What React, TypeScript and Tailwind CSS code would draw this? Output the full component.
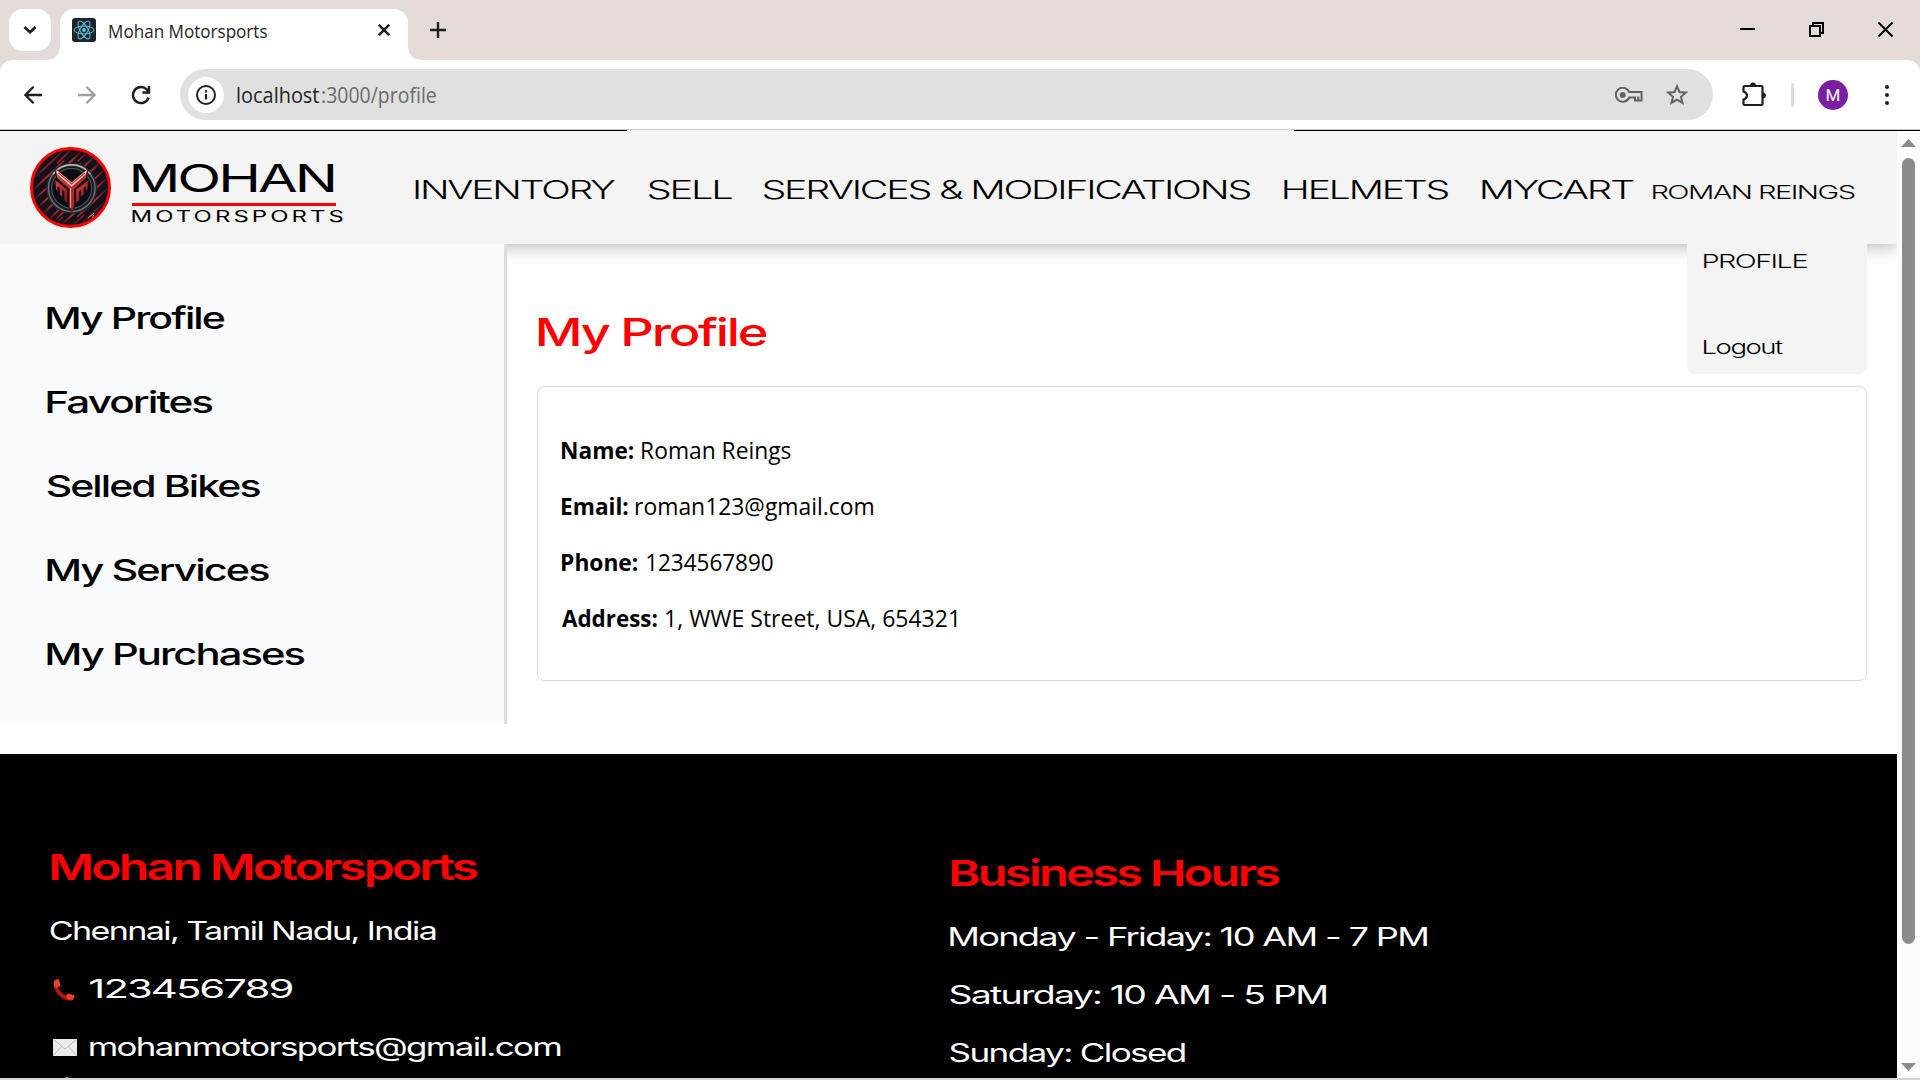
import React, { useLayoutEffect, useRef } from "react";

type FitProps = { w: number; className?: string; children: string };

/* Single line of text whose ink spans exactly `w` pixels. */
function Fit({ w, className = "", children }: FitProps) {
  const ref = useRef<HTMLSpanElement>(null);
  useLayoutEffect(() => {
    const fit = () => {
      const el = ref.current;
      const ctx = document.createElement("canvas").getContext("2d");
      if (!el || !ctx) return;
      const cs = getComputedStyle(el);
      ctx.font = `${cs.fontWeight} ${cs.fontSize} ${cs.fontFamily}`;
      (ctx as any).letterSpacing = cs.letterSpacing === "normal" ? "0px" : cs.letterSpacing;
      const m = ctx.measureText(children);
      const left = -m.actualBoundingBoxLeft;
      const ink = m.actualBoundingBoxRight - left;
      const s = w / ink;
      el.style.transform = `translateX(${-left * s}px) scaleX(${s})`;
    };
    fit();
    document.fonts?.ready.then(fit);
  }, [w, children]);
  return (
    <div className={`shrink-0 ${className}`} style={{ width: w }}>
      <span ref={ref} className="inline-block origin-left whitespace-pre align-top">
        {children}
      </span>
    </div>
  );
}

function ReactMark() {
  return (
    <svg viewBox="0 0 24 24" className="size-6 shrink-0">
      <rect width="24" height="24" rx="3" fill="#20232a" />
      <g fill="none" stroke="#58c4dc" strokeWidth="1">
        <ellipse cx="12" cy="12" rx="10" ry="3.9" />
        <ellipse cx="12" cy="12" rx="10" ry="3.9" transform="rotate(60 12 12)" />
        <ellipse cx="12" cy="12" rx="10" ry="3.9" transform="rotate(120 12 12)" />
      </g>
      <circle cx="12" cy="12" r="2" fill="#58c4dc" />
    </svg>
  );
}

function TabStrip() {
  return (
    <div className="flex h-[60px] bg-[#e3dbd8]">
      <div className="mt-[9px] ml-[9px] flex size-[42px] items-center justify-center rounded-[14px] bg-white">
        <svg viewBox="0 0 14 8" className="h-2 w-[14px]" fill="none" stroke="#1f1f1f" strokeWidth="2.6">
          <path d="M1.5 1 7 6.3 12.5 1" />
        </svg>
      </div>
      <svg viewBox="0 0 15 15" className="mt-[45px] -ml-[6px] size-[15px] shrink-0" fill="#fff">
        <path d="M15 0V15H0Q15 15 15 0Z" />
      </svg>
      <div className="mt-[9px] flex h-[51px] w-[348px] items-start rounded-t-[14px] bg-white pt-[9px] pl-3">
        <ReactMark />
        <Fit w={158} className="ml-[13px] font-['Open_Sans'] text-[18px] leading-[27px] text-[#1f1f1f]">
          Mohan Motorsports
        </Fit>
        <svg viewBox="0 0 12 12" className="mt-[6px] ml-[111px] size-3 shrink-0" stroke="#1f1f1f" strokeWidth="2.6">
          <path d="M.8.8 11.2 11.2M11.2.8.8 11.2" />
        </svg>
      </div>
      <svg viewBox="0 0 15 15" className="mt-[45px] size-[15px] shrink-0" fill="#fff">
        <path d="M0 0V15H15Q0 15 0 0Z" />
      </svg>
      <svg viewBox="0 0 16 16" className="mt-[22px] ml-[7px] size-4" stroke="#1f1f1f" strokeWidth="2.4">
        <path d="M8 0V16M0 8H16" />
      </svg>
      <div className="mt-[22px] mr-[27px] ml-auto flex gap-[54px]">
        <svg viewBox="0 0 15 15" className="size-[15px]" fill="#000">
          <path d="M0 6h15v2H0z" />
        </svg>
        <svg viewBox="0 0 15 15" className="size-[15px]" fill="none" stroke="#000" strokeWidth="2">
          <path d="M1 4H11V14H1ZM4 4V1H14V11H11" />
        </svg>
        <svg viewBox="0 0 15 15" className="size-[15px]" stroke="#000" strokeWidth="2">
          <path d="M.5.5 14.5 14.5M14.5.5.5 14.5" />
        </svg>
      </div>
    </div>
  );
}

function Toolbar() {
  return (
    <div className="h-[69px] bg-[#e3dbd8]">
      <div className="flex h-full items-center rounded-t-[12px] bg-white pt-px pl-6">
        <svg viewBox="0 0 18 18" className="size-[18px] shrink-0" fill="none" stroke="#1f1f1f" strokeWidth="2.3">
          <path d="M18 9H1.6M9.6.8 1.4 9l8.2 8.2" />
        </svg>
        <svg viewBox="0 0 18 18" className="ml-9 size-[18px] shrink-0" fill="none" stroke="#a0a0a0" strokeWidth="2.3">
          <path d="M0 9H16.4M8.4.8 16.6 9l-8.2 8.2" />
        </svg>
        <svg viewBox="0 0 20 20" className="ml-[35px] size-5 shrink-0" fill="none" stroke="#1f1f1f" strokeWidth="2.5">
          <path d="M17.6 12.6A8 8 0 1 1 15.9 4.6L18 7" />
          <path d="M18 1V7.4H11.4" />
        </svg>
        <div className="-mt-px ml-[29px] flex h-[51px] w-[1533px] shrink-0 items-center rounded-full bg-[#e0e0e0] pt-px pl-2">
          <div className="flex size-9 items-center justify-center rounded-full bg-white">
            <svg viewBox="0 0 20 20" className="size-5" fill="none" stroke="#1f1f1f" strokeWidth="2">
              <circle cx="10" cy="10" r="9" />
              <path d="M10 9v5.6M10 5.2v2.2" strokeWidth="2.2" />
            </svg>
          </div>
          <div className="flex font-['Open_Sans'] text-[21px] leading-[30px]">
            <Fit w={82} className="ml-[13px] text-[#1f1f1f]">localhost</Fit>
            <Fit w={114} className="ml-[3px] text-[#6a6a6a]">:3000/profile</Fit>
          </div>
          <svg viewBox="0 0 28 16" className="ml-auto h-4 w-7" fill="none" stroke="#5f6368" strokeWidth="2">
            <path d="M14.2 5H26.6V13.5H20V10.5H14.2A7 7 0 1 1 14.2 5Z" />
            <circle cx="7.7" cy="8" r="3" fill="#5f6368" stroke="none" />
            <path d="M23.3 9.5v4" />
          </svg>
          <svg viewBox="0 0 24 24" className="mr-6 ml-[22px] size-6" fill="none" stroke="#5f6368" strokeWidth="2">
            <path d="m12 3.3 2.5 5.8 6.3.55-4.8 4.1 1.5 6.1L12 16.6l-5.5 3.25 1.5-6.1-4.8-4.1 6.3-.55Z" />
          </svg>
        </div>
        <svg viewBox="0 0 26 26" className="-mt-[3px] ml-[28px] size-[26px] shrink-0">
          <path
            d="M4 5H20.5Q21.5 5 21.5 6V23Q21.5 24 20.5 24H3.5Q2.5 24 2.5 23V18.6Q6 17.2 6 14.5T2.5 10.4V6Q2.5 5 4 5Z"
            fill="none"
            stroke="#1f1f1f"
            strokeWidth="2.2"
          />
          <path d="M9 5a3 3.4 0 0 1 6 0ZM21.5 11.5a3.4 3 0 0 1 0 6Z" fill="#1f1f1f" />
        </svg>
        <div className="-mt-px ml-6 h-6 w-[3px] rounded-full bg-[#e3dbd8]" />
        <div className="ml-6 flex size-[30px] items-center justify-center rounded-full bg-[#7b1fa2] font-['Roboto'] text-[17px] leading-none text-white">
          M
        </div>
        <div className="ml-[37px] flex flex-col gap-1">
          <i className="size-1 rounded-full bg-[#1f1f1f]" />
          <i className="size-1 rounded-full bg-[#1f1f1f]" />
          <i className="size-1 rounded-full bg-[#1f1f1f]" />
        </div>
      </div>
    </div>
  );
}

function Emblem() {
  const strokes = Array.from({ length: 34 }, (_, i) => {
    const y = i * 4 - 18;
    const o = (i * 7) % 11;
    return `M${2 + o} ${y + 18}L${26 + o} ${y - 4}M${46 + o} ${y + 12}L${68 + o} ${y - 8}M${26 + o} ${y + 2}L${44 + o} ${y - 14}`;
  }).join("");
  return (
    <svg viewBox="0 0 81 81" className="size-[81px] shrink-0">
      <defs>
        <clipPath id="disc">
          <circle cx="40.5" cy="40.5" r="38" />
        </clipPath>
        <linearGradient id="blade" x1="0" y1="0" x2="1" y2="1">
          <stop offset="0" stopColor="#e8443e" />
          <stop offset="1" stopColor="#8c0e16" />
        </linearGradient>
        <radialGradient id="vignette">
          <stop offset="0.72" stopColor="#10121c" stopOpacity="0" />
          <stop offset="1" stopColor="#10121c" stopOpacity="0.95" />
        </radialGradient>
      </defs>
      <circle cx="40.5" cy="40.5" r="39" fill="#10121c" />
      <g clipPath="url(#disc)">
        <path d={strokes} stroke="#c02329" strokeWidth="1.5" fill="none" />
        <circle cx="40.5" cy="40.5" r="39" fill="url(#vignette)" />
      </g>
      <circle cx="41.7" cy="41.3" r="23.5" fill="#12141d" stroke="#22262d" strokeWidth="4" />
      <circle cx="41.7" cy="41.3" r="23.3" fill="none" stroke="#6f7877" strokeWidth="1.3" />
      <path d="M23 27a23.5 23.5 0 0 1 37.4 0" fill="none" stroke="#b5bbb0" strokeWidth="1.6" />
      <circle cx="41.7" cy="41.3" r="20" fill="#0b0d15" stroke="#4e5558" strokeWidth="1.2" />
      <g stroke="#12141d" strokeWidth=".9">
        <path d="M24.5 21 41.7 35 58.5 21 56.5 31 44.6 42V60L41.7 65 38.8 60V42L26.8 31Z" fill="url(#blade)" />
        <path d="M24.8 32.5 37.6 42.5V57L34 53V44.5L32.6 43.5V50.5L29.4 47.5V41L27.8 40V46L25.6 42Z" fill="url(#blade)" />
        <path d="M58.6 32.5 45.8 42.5V57L49.4 53V44.5L50.8 43.5V50.5L54 47.5V41L55.6 40V46L57.8 42Z" fill="url(#blade)" />
      </g>
      <path d="M26 22.5 41.7 35.5 57.2 22.5 55.6 27.5 41.7 39.8 27.6 27.5Z" fill="#e6ddca" />
      <path d="M28.5 26 41.7 37 55 26" stroke="#c9262b" strokeWidth="1.1" fill="none" />
      <path d="M40.6 41V61" stroke="#efc0b0" strokeWidth=".9" />
      <path d="M58 71 64 66M62 71l2-3" stroke="#c9954f" strokeWidth="1" />
      <circle cx="40.5" cy="40.5" r="39" fill="none" stroke="#ff0000" strokeWidth="3" />
    </svg>
  );
}

function SiteHeader() {
  return (
    <header className="relative flex h-[113px] bg-[#f4f4f4] pl-[30px] shadow-[0_4px_15px_rgba(0,0,0,0.25)] [clip-path:inset(0_0_-40px_0)]">
      <div className="mt-4">
        <Emblem />
      </div>
      <div className="mt-[27px] ml-[21px] w-[213px] text-black">
        <Fit w={201} className="ml-px text-[38px] leading-[41px] tracking-[-2px]">MOHAN</Fit>
        <div className="mt-1 h-[3px] w-[204px] bg-[#ff0000]" />
        <Fit w={212} className="mt-[1px] text-[15.5px] leading-[20px] tracking-[2px]">MOTORSPORTS</Fit>
      </div>
      <nav className="mt-[39px] ml-[70px] flex text-[25px] leading-[40px] font-light tracking-[-1.4px] text-black">
        <Fit w={200}>INVENTORY</Fit>
        <Fit w={84} className="ml-[33px]">SELL</Fit>
        <Fit w={488} className="ml-[31px]">SERVICES &amp; MODIFICATIONS</Fit>
        <Fit w={165} className="ml-[33px]">HELMETS</Fit>
        <Fit w={152} className="ml-[33px]">MYCART</Fit>
        <Fit w={203} className="mt-[2px] ml-[18px] text-[18.5px] leading-[40px] tracking-[-1px]">ROMAN REINGS</Fit>
      </nav>
    </header>
  );
}

const links: [string, number][] = [
  ["My Profile", 178],
  ["Favorites", 165.5],
  ["Selled Bikes", 213],
  ["My Services", 222],
  ["My Purchases", 257.5],
];

const details: [string, number, string, number, string][] = [
  ["Name:", 71.5, "Roman Reings", 149, "ml-[9px]"],
  ["Email:", 66, "roman123@gmail.com", 237.5, "ml-[8px]"],
  ["Phone:", 75.5, "1234567890", 126, "ml-[10px]"],
  ["Address:", 95, "1, WWE Street, USA, 654321", 290.5, "ml-[9px]"],
];

function ProfileBody() {
  return (
    <div className="flex h-[510px]">
      <aside className="relative h-[480px] w-[507px] border-r-[3px] border-[#ddd] bg-[#f8fafc] pt-[32px] pl-[47px]">
        {links.map(([label, w]) => (
          <Fit key={label} w={w} className="h-[84px] text-[30px] leading-[85px] font-medium tracking-[-1.4px] text-black">
            {label}
          </Fit>
        ))}
      </aside>
      <main className="pt-[61px] pl-[30px]">
        <Fit w={228} className="ml-[2px] text-[37.5px] leading-[56px] font-medium tracking-[-1.6px] text-[#ff0000]">
          My Profile
        </Fit>
        <section className="mt-[25px] h-[295px] w-[1330px] rounded-[8px] border border-[#ddd] pt-[35px] pl-[23.5px] font-['Open_Sans'] text-[24px] leading-[56px] text-black">
          {details.map(([k, kw, v, vw, gap]) => (
            <div key={k} className="flex h-[56px]">
              <Fit w={kw} className="font-bold">{k}</Fit>
              <Fit w={vw} className={gap}>{v}</Fit>
            </div>
          ))}
        </section>
      </main>
    </div>
  );
}

function Footer() {
  return (
    <footer className="flex h-[324px] overflow-hidden bg-black text-[25.5px] leading-[58px] tracking-[-1.2px] text-white">
      <div className="w-[900px] shrink-0 pt-[84px] pl-[50px]">
        <Fit w={427} className="ml-px text-[36px] leading-[58px] font-semibold tracking-[-2px] text-[#ff0000]">
          Mohan Motorsports
        </Fit>
        <Fit w={386} className="mt-[6px]">Chennai, Tamil Nadu, India</Fit>
        <div className="flex h-[58px]">
          <svg viewBox="0 0 22 22" className="mt-[19px] ml-[3px] size-[22px]">
            <path d="M1 2.5Q3-.5 6 .6L7.2 6.8 4.8 8.6Q7.5 14 13 16.8L15 14.6 21.4 16.6Q21.5 20 18.6 21.6 12 22.4 5.2 15.8-.4 9 1 2.5Z" fill="#b81420" />
            <path d="M1 2.5Q3-.5 6 .6L7.2 6.8 3.4 9 1 7ZM13 17 15 14.6 21.4 16.6Q21.4 19.4 19.6 20.8L15 20.4Z" fill="#ef3f24" />
          </svg>
          <Fit w={203} className="ml-[15px]">123456789</Fit>
        </div>
        <div className="flex h-[58px]">
          <svg viewBox="0 0 24 17" className="mt-[21px] ml-[3px] h-[17px] w-6">
            <path d="M0 0H24V17H0Z" fill="#ececec" />
            <path d="M.5.5 12 10 23.5.5M.5 16.5 8.5 7.5M23.5 16.5l-8-9" fill="none" stroke="#b9b9b9" strokeWidth="1" />
          </svg>
          <Fit w={472} className="ml-[12px]">mohanmotorsports@gmail.com</Fit>
        </div>
        <div className="mt-[1px] ml-[14px] h-2 w-[6px] rounded-full bg-[#888]" />
      </div>
      <div className="pt-[90px] pl-[50px]">
        <Fit w={329} className="ml-[1px] text-[36px] leading-[58px] font-semibold tracking-[-2px] text-[#ff0000]">
          Business Hours
        </Fit>
        <Fit w={477} className="mt-[6px]">Monday - Friday: 10 AM - 7 PM</Fit>
        <Fit w={376}>Saturday: 10 AM - 5 PM</Fit>
        <Fit w={235}>Sunday: Closed</Fit>
      </div>
    </footer>
  );
}

function Scrollbar() {
  return (
    <div className="flex h-[947px] w-[23px] flex-col items-center bg-[#fcfcfc] pt-2">
      <svg viewBox="0 0 15 8" className="mr-px h-2 w-[15px]" fill="#8b8b8b">
        <path d="M7.5 0 15 8H0Z" />
      </svg>
      <div className="mt-[11px] h-[786px] w-[13px] rounded-full bg-[#8b8b8b]" />
      <svg viewBox="0 0 15 8" className="mt-[119px] mr-px h-2 w-[15px]" fill="#8b8b8b">
        <path d="M0 0H15L7.5 8Z" />
      </svg>
    </div>
  );
}

export default function App() {
  return (
    <div className="h-[1080px] w-[1920px] overflow-hidden bg-white font-['Inter']">
      <TabStrip />
      <Toolbar />
      <div className="h-px bg-[#c8c8c8]" />
      <div className="flex h-px justify-between bg-[#f4f4f4]">
        <div className="w-[627px] bg-black" />
        <div className="w-[626px] bg-black" />
      </div>
      <div className="flex h-[947px]">
        <div className="relative w-[1897px]">
          <SiteHeader />
          <ProfileBody />
          <Footer />
          <div className="absolute top-[113px] left-[1687px] h-[130px] w-[180px] rounded-b-[8px] bg-[#f4f4f4] pl-[15.5px] text-[18.5px] leading-[34px] font-light tracking-[-1px] text-black">
            <Fit w={104}>PROFILE</Fit>
            <Fit w={81} className="mt-[52px]">Logout</Fit>
          </div>
        </div>
        <Scrollbar />
      </div>
      <div className="h-[2px] bg-[#d4d4d4]" />
    </div>
  );
}
